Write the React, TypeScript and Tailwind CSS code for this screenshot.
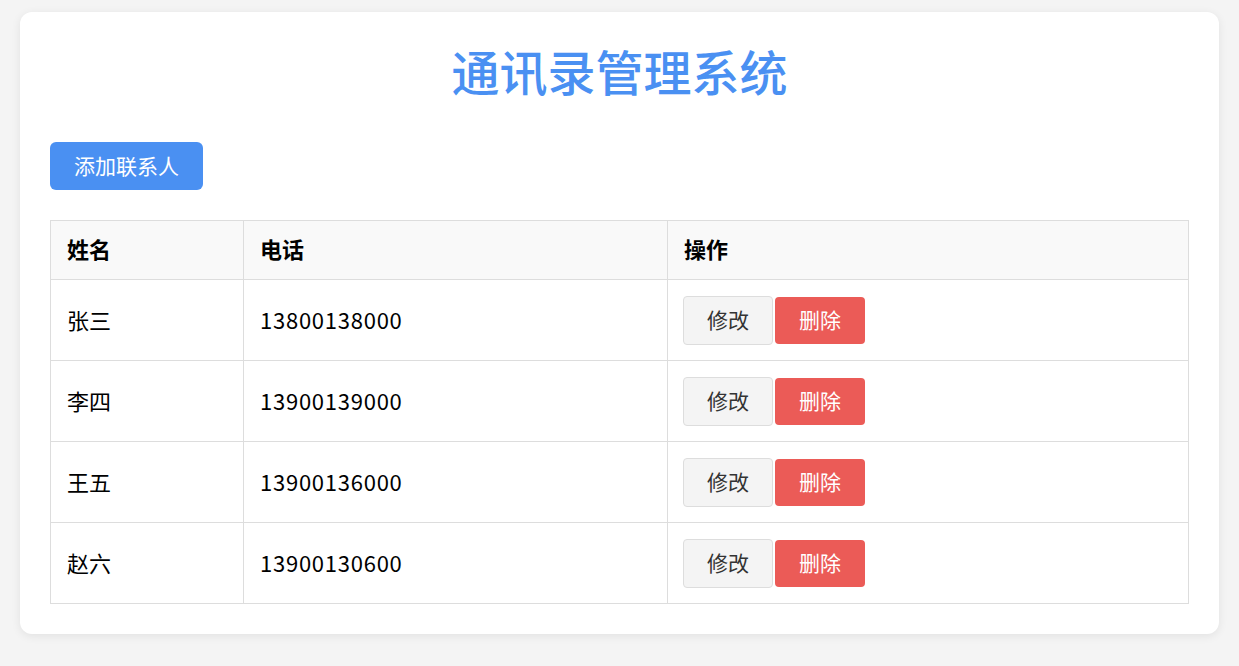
import React from "react";

const contacts = [
  { name: "张三", phone: "13800138000" },
  { name: "李四", phone: "13900139000" },
  { name: "王五", phone: "13900136000" },
  { name: "赵六", phone: "13900130600" },
];

export default function App() {
  return (
    <div
      className="min-h-[666px] bg-[#f4f4f4] px-5 pt-3"
      style={{ fontFamily: '"Noto Sans CJK SC", "Noto Sans", sans-serif' }}
    >
      <div className="rounded-xl bg-white px-[30px] pb-[30px] pt-[26px] shadow-[0_2px_10px_rgba(0,0,0,0.08)]">
        <h1 className="text-center text-[48px] font-medium leading-[64px] text-[#4a90f2]">
          通讯录管理系统
        </h1>

        <button className="mt-[40px] h-12 rounded-md bg-[#4a90f2] px-6 text-[21px] text-white">
          添加联系人
        </button>

        <table className="mt-[30px] w-full border-collapse text-[22px] text-black">
          <thead>
            <tr className="bg-[#f9f9f9]">
              <th className="w-[193px] border border-[#dddddd] px-4 pb-[16px] pt-[12px] text-left font-bold leading-[30px]">姓名</th>
              <th className="w-[424px] border border-[#dddddd] px-4 pb-[16px] pt-[12px] text-left font-bold leading-[30px]">电话</th>
              <th className="border border-[#dddddd] px-4 pb-[16px] pt-[12px] text-left font-bold leading-[30px]">操作</th>
            </tr>
          </thead>
          <tbody>
            {contacts.map((c) => (
              <tr key={c.name}>
                <td className="h-[81px] border border-[#dddddd] px-4 pb-[2px]">{c.name}</td>
                <td className="border border-[#dddddd] px-4 pb-[2px] tracking-[0.75px]">{c.phone}</td>
                <td className="border border-[#dddddd] pl-[15px] pr-4">
                  <div className="flex items-center gap-[2px]">
                    <button className="h-[49px] w-[90px] rounded-[4px] border border-[#dddddd] bg-[#f4f4f4] text-[21px] text-[#333333]">
                      修改
                    </button>
                    <button className="h-[47px] w-[90px] rounded-[4px] bg-[#eb5b57] text-[21px] text-white">
                      删除
                    </button>
                  </div>
                </td>
              </tr>
            ))}
          </tbody>
        </table>
      </div>
    </div>
  );
}
